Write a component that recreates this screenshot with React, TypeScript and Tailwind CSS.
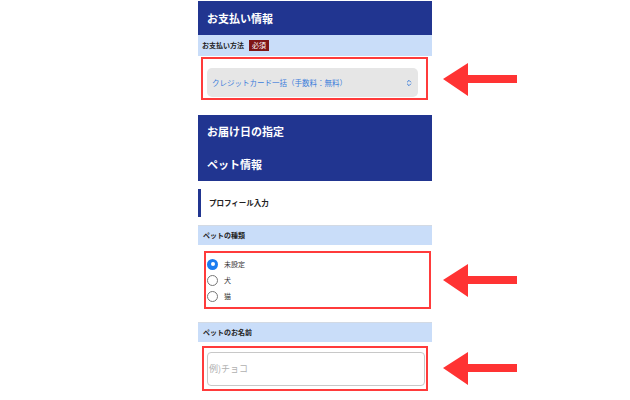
import React from "react";
import { ChevronsUpDown } from "lucide-react";

function Arrow({ cls }: { cls: string }) {
  return (
    <svg className={"absolute left-[442px] " + cls} width="76" height="36" viewBox="0 0 76 36">
      <polygon points="1,17 26,1 26,13 75,13 75,21 26,21 26,34" fill="#ff3333" />
    </svg>
  );
}

function Radio({ checked, label }: { checked?: boolean; label: string }) {
  return (
    <div className="flex items-center h-[16px]">
      {checked ? (
        <div className="w-[11px] h-[11px] rounded-full bg-[#1a7cf0] flex items-center justify-center">
          <div className="w-[4px] h-[4px] rounded-full bg-white" />
        </div>
      ) : (
        <div className="w-[11px] h-[11px] rounded-full border border-[#777] bg-white" />
      )}
      <span className="ml-[6px] text-[7px] text-[#333]">{label}</span>
    </div>
  );
}

export default function App() {
  return (
    <div className="relative w-[630px] h-[400px] bg-white overflow-hidden font-['Noto_Sans_CJK_JP','Noto_Sans',sans-serif]">
      <div className="mx-auto w-[234px] pt-[1px]">
        <div className="h-[34px] bg-[#213590] flex items-center pl-[9px] text-white font-bold text-[11px]">
          お支払い情報
        </div>
        <div className="h-[21px] bg-[#c9ddf9] flex items-center pl-[4px] gap-[5px]">
          <span className="text-[7px] font-bold text-[#222]">お支払い方法</span>
          <span className="bg-[#7f1515] text-white text-[7px] px-[3px] h-[11px] flex items-center">必須</span>
        </div>
        <div className="ml-[3px] w-[227px] h-[43px] mt-[1px] border-2 border-[#ff3b3b] pt-[9px] pl-[4px]">
          <div className="w-[211px] h-[29px] rounded-[5px] bg-[#e6e6e6] flex items-center justify-between pl-[5px] pr-[5px]">
            <span className="text-[7.5px] text-[#3b7ddb]">クレジットカード一括（手数料：無料）</span>
            <ChevronsUpDown size={8} color="#3b7ddb" strokeWidth={3} />
          </div>
        </div>
        <div className="mt-[15px] bg-[#213590] text-white font-bold text-[11px]">
          <div className="h-[33px] flex items-center pl-[9px]">お届け日の指定</div>
          <div className="h-[33px] flex items-center pl-[9px]">ペット情報</div>
        </div>
        <div className="pt-[8px] h-[44px]">
          <div className="h-[28px] border-l-[3px] border-[#213590] flex items-center pl-[8px] text-[7.5px] font-bold text-[#222]">
            プロフィール入力
          </div>
        </div>
        <div className="h-[20px] bg-[#c9ddf9] border-t border-[#d3dae4] flex items-center pl-[5px] text-[7px] font-bold text-[#222]">
          ペットの種類
        </div>
        <div className="ml-[6px] mt-[6px] w-[227px] h-[58px] border-2 border-[#ff3b3b] pt-[3px] pl-[1px] flex flex-col justify-start">
          <Radio checked label="未設定" />
          <Radio label="犬" />
          <Radio label="猫" />
        </div>
        <div className="mt-[13px] h-[20px] bg-[#c9ddf9] border-t border-[#d3dae4] flex items-center pl-[5px] text-[7px] font-bold text-[#222]">
          ペットのお名前
        </div>
        <div className="ml-[4px] mt-[4px] w-[226px] h-[45px] border-2 border-[#ff3b3b] pt-[4px] pl-[3px]">
          <div className="w-[218px] h-[34px] rounded-[4px] border-[1.5px] border-[#c8c8c8] bg-white flex items-center pl-[1px] text-[9px] text-[#b0b0b0]">
            例)チョコ
          </div>
        </div>
      </div>
      <Arrow cls="top-[62px]" />
      <Arrow cls="top-[263px]" />
      <Arrow cls="top-[351px]" />
    </div>
  );
}
